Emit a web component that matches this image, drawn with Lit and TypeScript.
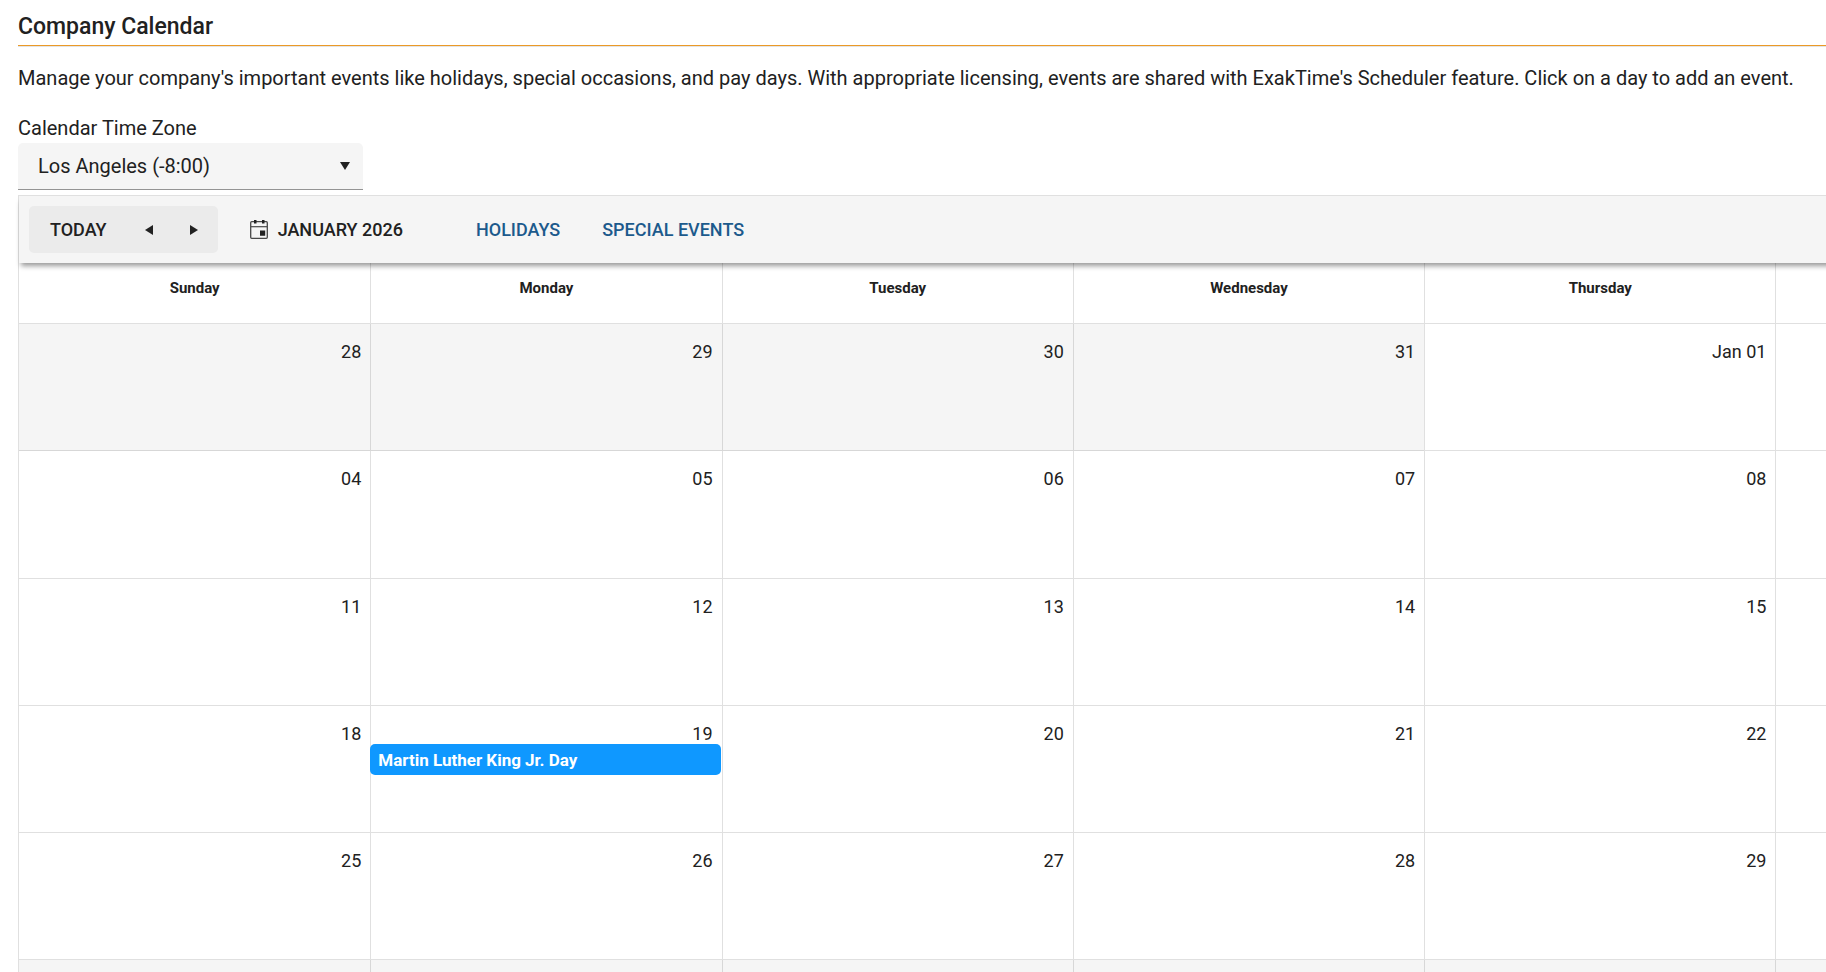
import { LitElement, html, css, nothing } from "lit";
import { customElement, property, state } from "lit/decorators.js";
import { classMap } from "lit/directives/class-map.js";

interface Day {
  label: string;
  outside: boolean;
  event?: string;
}

const WEEKDAYS = ["Sunday", "Monday", "Tuesday", "Wednesday", "Thursday", "Friday", "Saturday"];
const FIRST_DAY = new Date(2025, 11, 28);
const EVENTS: Record<string, string> = { "0-19": "Martin Luther King Jr. Day" };

function buildWeeks(): Day[][] {
  return Array.from({ length: 6 }, (_, week) =>
    Array.from({ length: 7 }, (_, weekday) => {
      const date = new Date(FIRST_DAY);
      date.setDate(date.getDate() + week * 7 + weekday);
      const number = String(date.getDate()).padStart(2, "0");
      const month = date.toLocaleString("en-US", { month: "short" });
      return {
        label: date.getDate() === 1 ? `${month} ${number}` : number,
        outside: date.getMonth() !== 0,
        event: EVENTS[`${date.getMonth()}-${date.getDate()}`],
      };
    }),
  );
}

@customElement("calendar-toolbar")
class CalendarToolbar extends LitElement {
  static styles = css`
    :host {
      display: flex;
      align-items: center;
      padding: 10px;
      background: #f5f5f5;
      border-top: 1px solid #e0e0e0;
      box-shadow: 0 5px 5px -2px rgba(0, 0, 0, 0.4);
    }
    button {
      height: 47px;
      padding: 0 21px;
      border: 0;
      border-radius: 5px;
      background: none;
      font: 500 18px/24px Roboto, sans-serif;
      color: #212121;
      text-transform: uppercase;
      white-space: nowrap;
      cursor: pointer;
    }
    .group {
      display: flex;
      padding-right: 1px;
      border-radius: 5px;
      background: #ebebeb;
      margin-right: 11px;
    }
    .today {
      padding-right: 20px;
    }
    .arrow {
      display: flex;
      align-items: center;
      justify-content: center;
      width: 45px;
      padding: 0;
    }
    .arrow svg {
      width: 8px;
      height: 10px;
      fill: #212121;
    }
    .month {
      display: flex;
      align-items: center;
      gap: 10px;
      margin-right: 31px;
    }
    .month svg {
      width: 18px;
      height: 20px;
    }
    .link {
      color: #1c5a8c;
    }
  `;

  @property() month = "";

  render() {
    return html`
      <div class="group">
        <button type="button" class="today">Today</button>
        <button type="button" class="arrow" aria-label="Previous">
          <svg viewBox="0 0 8 10"><path d="M8 0v10L0 5z" /></svg>
        </button>
        <button type="button" class="arrow" aria-label="Next">
          <svg viewBox="0 0 8 10"><path d="M0 0v10l8-5z" /></svg>
        </button>
      </div>
      <button type="button" class="month">
        <svg viewBox="0 0 18 20" aria-hidden="true">
          <rect x="0.7" y="1.7" width="16.6" height="16.6" rx="1" fill="none" stroke="#484848" stroke-width="1.3" />
          <path d="M1 6.7h16" stroke="#484848" stroke-width="1.2" />
          <path d="M4 0h2.5v3.4H4zM12 0h2.5v3.4H12zM10 10.5h5.2v5.2H10z" fill="#212121" />
        </svg>
        <span>${this.month}</span>
      </button>
      <button type="button" class="link">Holidays</button>
      <button type="button" class="link">Special Events</button>
    `;
  }
}

@customElement("month-grid")
class MonthGrid extends LitElement {
  static styles = css`
    :host {
      display: block;
    }
    table {
      width: 100%;
      table-layout: fixed;
      border-collapse: separate;
      border-spacing: 0;
    }
    th,
    td {
      box-sizing: border-box;
      padding: 0;
      vertical-align: top;
      border: 0 solid rgba(0, 0, 0, 0.12);
      border-width: 0 0 1px 1px;
    }
    th:first-child,
    td:first-child {
      border-left: 0;
    }
    th {
      height: 61px;
      padding-top: 15px;
      font-size: 15px;
      line-height: 20px;
      font-weight: 700;
    }
    td {
      height: 127px;
      padding-top: 18px;
    }
    tr:nth-child(4n + 2) td {
      height: 128px;
    }
    .outside {
      background: #f5f5f5;
    }
    .date {
      display: block;
      padding-right: 9px;
      font-size: 18px;
      line-height: 20px;
      text-align: right;
    }
    .event {
      display: block;
      box-sizing: border-box;
      width: 100%;
      margin-left: -1px;
      padding: 1px 8px 0;
      border: 0;
      border-radius: 5px;
      background: #0f98ff;
      color: #fff;
      font: 700 17px/30px Roboto, sans-serif;
      text-align: left;
      cursor: pointer;
    }
  `;

  @property({ attribute: false }) weeks: Day[][] = [];

  render() {
    return html`
      <table>
        <thead>
          <tr>
            ${WEEKDAYS.map((name) => html`<th scope="col">${name}</th>`)}
          </tr>
        </thead>
        <tbody>
          ${this.weeks.map(
            (week) => html`<tr>
              ${week.map(
                (day) => html`<td class=${classMap({ outside: day.outside })}>
                  <span class="date">${day.label}</span>
                  ${day.event ? html`<button type="button" class="event">${day.event}</button>` : nothing}
                </td>`,
              )}
            </tr>`,
          )}
        </tbody>
      </table>
    `;
  }
}

@customElement("app-root")
class AppRoot extends LitElement {
  static styles = css`
    :host {
      display: block;
      box-sizing: border-box;
      height: 100vh;
      overflow: auto;
      scrollbar-width: none;
      padding: 12px 0 0 18px;
      background: #fff;
      color: #212121;
      font: 400 20px/24px Roboto, sans-serif;
    }
    h1 {
      margin: 0;
      padding-bottom: 3px;
      border-bottom: 1px solid #eb9a27;
      box-shadow: 0 1px 0 #e4e4e4;
      font-size: 23px;
      line-height: 30px;
      font-weight: 500;
    }
    p {
      margin: 20px 0 26px;
    }
    .zone {
      display: flex;
      flex-direction: column;
      align-items: flex-start;
      gap: 3px;
      margin-bottom: 5px;
    }
    .field {
      display: grid;
      align-items: center;
      width: 345px;
    }
    .field > * {
      grid-area: 1 / 1;
    }
    .field svg {
      justify-self: end;
      width: 10px;
      height: 8px;
      margin: 0 13px 1px 0;
      fill: #212121;
      pointer-events: none;
    }
    select {
      appearance: none;
      width: 100%;
      height: 47px;
      padding: 0 36px 0 20px;
      border: 0;
      border-bottom: 1px solid #949494;
      border-radius: 5px 5px 0 0;
      background: #f5f5f5;
      color: inherit;
      font: inherit;
    }
    .calendar {
      box-sizing: border-box;
      width: 136%;
      min-width: 2460px;
      border-left: 1px solid #e0e0e0;
    }
  `;

  @state() private weeks = buildWeeks();

  render() {
    return html`
      <h1>Company Calendar</h1>
      <p>
        Manage your company's important events like holidays, special occasions, and pay days. With appropriate
        licensing, events are shared with ExakTime's Scheduler feature. Click on a day to add an event.
      </p>
      <div class="zone">
        <label for="zone">Calendar Time Zone</label>
        <div class="field">
          <select id="zone">
            <option>Los Angeles (-8:00)</option>
          </select>
          <svg viewBox="0 0 10 8" aria-hidden="true"><path d="M0 0h10L5 8z" /></svg>
        </div>
      </div>
      <div class="calendar">
        <calendar-toolbar month="January 2026"></calendar-toolbar>
        <month-grid .weeks=${this.weeks}></month-grid>
      </div>
    `;
  }
}
